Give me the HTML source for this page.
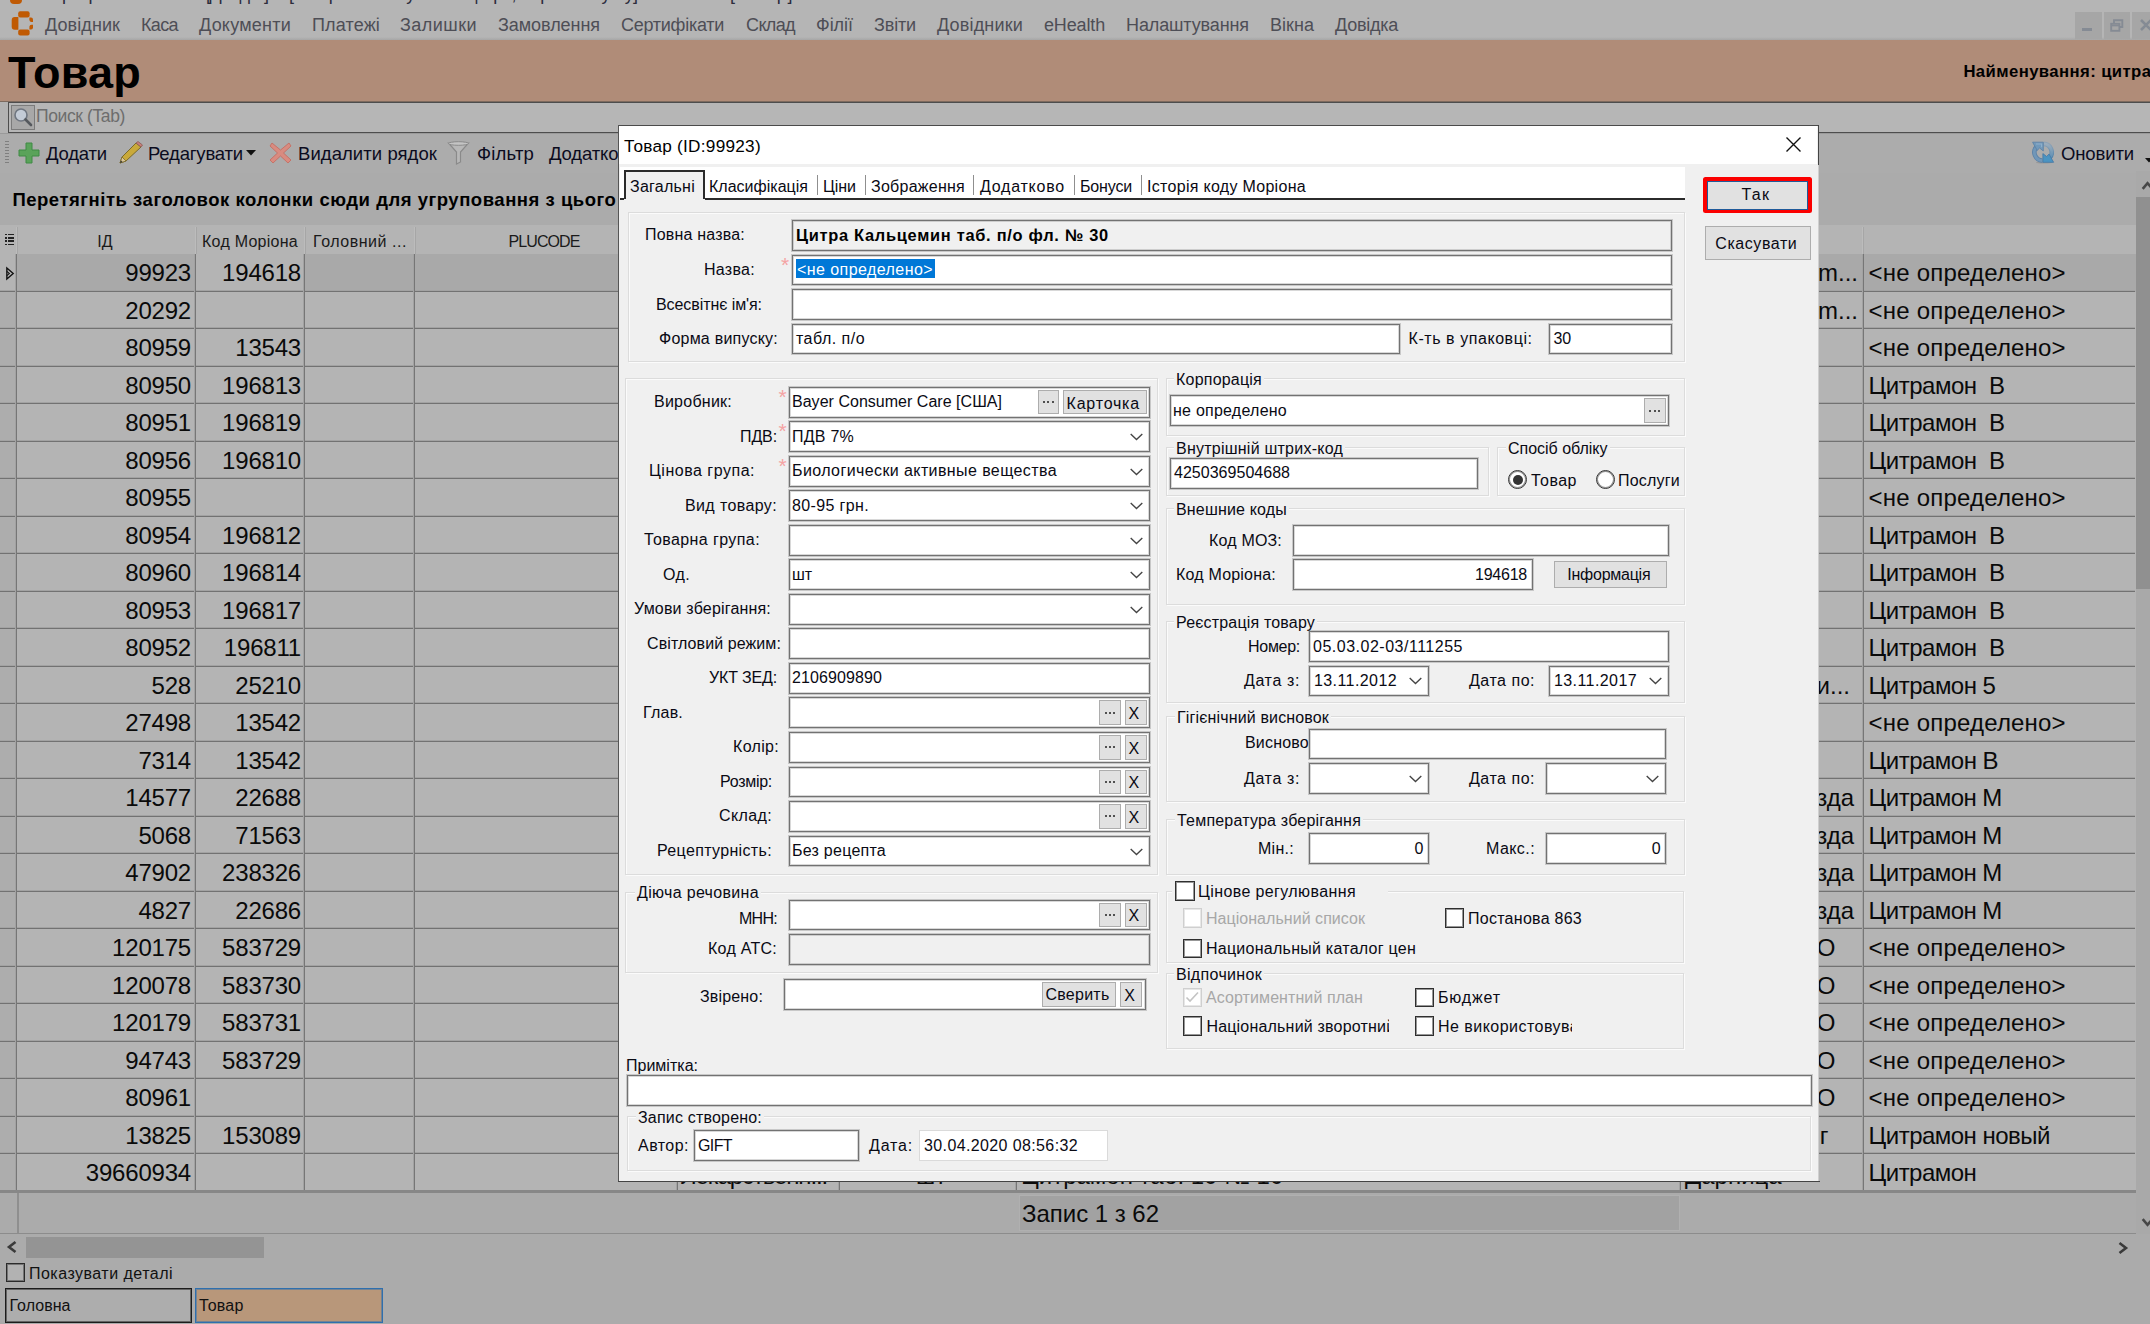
<!DOCTYPE html>
<html><head><meta charset="utf-8"><title>Товар</title><style>
html,body{margin:0;padding:0;}
body{width:2150px;height:1324px;overflow:hidden;position:relative;background:#ababab;font-family:"Liberation Sans",sans-serif;}
.t{position:absolute;white-space:pre;line-height:1;font-family:"Liberation Sans",sans-serif;}
.r{position:absolute;box-sizing:border-box;}
svg{position:absolute;overflow:visible;}
</style></head><body>
<div class="r" style="left:0.00px;top:0.00px;width:2150.00px;height:40.00px;background:#b5b5b5;"></div>
<div class="r" style="left:0.00px;top:36.50px;width:2150.00px;height:3.50px;background:linear-gradient(#b5b5b5,#a6a6a6);"></div>
<div class="r" style="left:0;top:0;width:2150px;height:5px;overflow:hidden;"><span class="t" style="left:49.00px;top:-15.00px;font-size:18px;color:#2c2c3c;">Програма</span><span class="t" style="left:206.00px;top:-15.00px;font-size:18px;color:#2c2c3c;letter-spacing:-1.500px;">[Довідник</span><span class="t" style="left:264.00px;top:-15.00px;font-size:18px;color:#2c2c3c;">]</span><span class="t" style="left:289.00px;top:-15.00px;font-size:18px;color:#2c2c3c;letter-spacing:-0.868px;">[Товар: Найменування: цитра, Виробник: усі у]</span><span class="t" style="left:730.00px;top:-15.00px;font-size:18px;color:#2c2c3c;letter-spacing:0.574px;">[Товар]</span></div>
<div class="r" style="left:9.50px;top:0.00px;width:12.00px;height:4.00px;background:#bf5a05;border-radius:0 0 4px 4px;"></div>
<svg style="left:11px;top:10px" width="24" height="27" viewBox="11 10 24 27">
<rect x="18.2" y="11.2" width="11.4" height="6.2" rx="2" fill="#c05a03"/>
<rect x="18.2" y="29.4" width="11.4" height="6.2" rx="2" fill="#c05a03"/>
<path d="M18.4 17 V29.8 H14.7 a3 3 0 0 1 -3 -3 V20 a3 3 0 0 1 3 -3 Z" fill="#c05a03"/>
<path d="M29.4 17.4 H31 a2 2 0 0 1 2 2 V22 H31.5 a2.2 2.2 0 0 1 -2.1 -2 Z" fill="#c05a03"/>
<path d="M29.4 29.4 H31 a2 2 0 0 0 2 -2 V24.8 H31.5 a2.2 2.2 0 0 0 -2.1 2 Z" fill="#c05a03"/>
</svg>
<span class="t" style="left:45.00px;top:16.00px;font-size:18px;color:#4e4e56;letter-spacing:0.082px;">Довідник</span>
<span class="t" style="left:141.00px;top:16.00px;font-size:18px;color:#4e4e56;letter-spacing:-0.627px;">Каса</span>
<span class="t" style="left:199.00px;top:16.00px;font-size:18px;color:#4e4e56;letter-spacing:0.233px;">Документи</span>
<span class="t" style="left:312.00px;top:16.00px;font-size:18px;color:#4e4e56;letter-spacing:0.150px;">Платежі</span>
<span class="t" style="left:400.00px;top:16.00px;font-size:18px;color:#4e4e56;letter-spacing:0.456px;">Залишки</span>
<span class="t" style="left:498.00px;top:16.00px;font-size:18px;color:#4e4e56;letter-spacing:-0.056px;">Замовлення</span>
<span class="t" style="left:621.00px;top:16.00px;font-size:18px;color:#4e4e56;letter-spacing:-0.265px;">Сертифікати</span>
<span class="t" style="left:746.00px;top:16.00px;font-size:18px;color:#4e4e56;letter-spacing:-0.619px;">Склад</span>
<span class="t" style="left:816.00px;top:16.00px;font-size:18px;color:#4e4e56;letter-spacing:-0.037px;">Філії</span>
<span class="t" style="left:874.00px;top:16.00px;font-size:18px;color:#4e4e56;letter-spacing:-0.147px;">Звіти</span>
<span class="t" style="left:937.00px;top:16.00px;font-size:18px;color:#4e4e56;letter-spacing:0.178px;">Довідники</span>
<span class="t" style="left:1044.00px;top:16.00px;font-size:18px;color:#4e4e56;letter-spacing:-0.149px;">eHealth</span>
<span class="t" style="left:1126.00px;top:16.00px;font-size:18px;color:#4e4e56;letter-spacing:-0.118px;">Налаштування</span>
<span class="t" style="left:1270.00px;top:16.00px;font-size:18px;color:#4e4e56;letter-spacing:0.033px;">Вікна</span>
<span class="t" style="left:1335.00px;top:16.00px;font-size:18px;color:#4e4e56;letter-spacing:-0.250px;">Довідка</span>
<div class="r" style="left:2075.00px;top:11.50px;width:26.50px;height:27.00px;background:#a6a6a6;"></div>
<div class="r" style="left:2103.50px;top:11.50px;width:26.50px;height:27.00px;background:#a6a6a6;"></div>
<div class="r" style="left:2132.00px;top:11.50px;width:26.50px;height:27.00px;background:#a6a6a6;"></div>
<div class="r" style="left:2082.00px;top:28.00px;width:9.50px;height:2.60px;background:#858b94;"></div>
<svg style="left:2109.5px;top:18.5px" width="14" height="13" viewBox="0 0 14 13" fill="none" stroke="#858b94" stroke-width="1.9"><path d="M4 4 V1.2 H12.3 V8 H9.5"/><rect x="1.2" y="4.8" width="8.2" height="7" /><path d="M1.2 6.6 H9.4" stroke-width="1.5"/></svg>
<svg style="left:2140px;top:19px" width="12" height="12" viewBox="0 0 12 12" fill="none" stroke="#858b94" stroke-width="2.6"><path d="M1 1 L11 11 M11 1 L1 11"/></svg>
<div class="r" style="left:0.00px;top:40.00px;width:2150.00px;height:61.50px;background:#b08c78;"></div>
<div class="r" style="left:0.00px;top:100.50px;width:2150.00px;height:1.50px;background:#7d6a5e;"></div>
<span class="t" style="left:8.00px;top:50.00px;font-size:45px;color:#000;font-weight:bold;letter-spacing:0.254px;">Товар</span>
<span class="t" style="left:1963.40px;top:64.00px;font-size:16.7px;color:#000;font-weight:bold;letter-spacing:0.414px;">Найменування: цитра</span>
<div class="r" style="left:0.00px;top:102.00px;width:2150.00px;height:31.00px;background:#b2b2b2;"></div>
<div class="r" style="left:8.00px;top:102.00px;width:2160.00px;height:30.50px;background:#b6b6b6;border:1.5px solid #4d4d4d;"></div>
<div class="r" style="left:11.00px;top:105.00px;width:23.50px;height:24.50px;background:#a8a8a8;border:1px solid #7b7b7b;"></div>
<svg style="left:13px;top:107px" width="20" height="20" viewBox="0 0 20 20">
<circle cx="8" cy="8" r="6" fill="#c3cbd6" stroke="#6f7680" stroke-width="1.6"/>
<path d="M12.5 12.5 L18 18" stroke="#55595e" stroke-width="2.6" stroke-linecap="round"/></svg>
<span class="t" style="left:36.00px;top:108.00px;font-size:17.5px;color:#6d6d6d;letter-spacing:-0.384px;">Поиск (Tab)</span>
<div class="r" style="left:0.00px;top:133.00px;width:2150.00px;height:40.00px;background:#acacac;"></div>
<div class="r" style="left:0.00px;top:132.50px;width:2150.00px;height:1.00px;background:#9a9a9a;"></div>
<div class="r" style="left:5.00px;top:141.00px;width:4.00px;height:1.20px;background:#7f7f7f;"></div>
<div class="r" style="left:5.00px;top:144.00px;width:4.00px;height:1.20px;background:#7f7f7f;"></div>
<div class="r" style="left:5.00px;top:147.00px;width:4.00px;height:1.20px;background:#7f7f7f;"></div>
<div class="r" style="left:5.00px;top:150.00px;width:4.00px;height:1.20px;background:#7f7f7f;"></div>
<div class="r" style="left:5.00px;top:153.00px;width:4.00px;height:1.20px;background:#7f7f7f;"></div>
<div class="r" style="left:5.00px;top:156.00px;width:4.00px;height:1.20px;background:#7f7f7f;"></div>
<div class="r" style="left:5.00px;top:159.00px;width:4.00px;height:1.20px;background:#7f7f7f;"></div>
<div class="r" style="left:5.00px;top:162.00px;width:4.00px;height:1.20px;background:#7f7f7f;"></div>
<svg style="left:18px;top:142px" width="22" height="22" viewBox="0 0 22 22"><path d="M8 1 h6 v7 h7 v6 h-7 v7 h-6 v-7 h-7 v-6 h7 z" fill="#5aa35a" stroke="#3f8a44" stroke-width="1"/></svg>
<span class="t" style="left:46.00px;top:145.00px;font-size:18.5px;color:#0b0b1e;letter-spacing:-0.184px;">Додати</span>
<svg style="left:117px;top:140px" width="28" height="26" viewBox="0 0 28 26">
<path d="M3 23 L5 17 L19 3 L24 7 L9 21 Z" fill="#c9a93a" stroke="#7a6a2c" stroke-width="1"/>
<path d="M19 3 L21 1.5 L25.5 5 L24 7 Z" fill="#c97f79" stroke="#8a5a55" stroke-width="0.8"/>
<path d="M3 23 L5 17 L9 21 Z" fill="#d9c59a" stroke="#7a6a2c" stroke-width="0.8"/>
<path d="M3 23 L4 20.5 L5.5 22 Z" fill="#333"/></svg>
<span class="t" style="left:148.00px;top:145.00px;font-size:18.5px;color:#0b0b1e;letter-spacing:-0.180px;">Редагувати</span>
<svg style="left:246px;top:150px" width="10" height="6" viewBox="0 0 10 6"><path d="M0 0 H10 L5 5.5 Z" fill="#111"/></svg>
<svg style="left:269px;top:142px" width="23" height="22" viewBox="0 0 23 22"><path d="M3 1 L11.5 8 L20 1 L22 4 L14.5 11 L22 18 L19 21 L11.5 14 L4 21 L1 18 L8.5 11 L1 4 Z" fill="#d98b80" stroke="#c46e63" stroke-width="0.9"/></svg>
<span class="t" style="left:298.00px;top:145.00px;font-size:18.5px;color:#0b0b1e;letter-spacing:0.063px;">Видалити рядок</span>
<svg style="left:447px;top:141px" width="23" height="24" viewBox="0 0 23 24"><path d="M1.5 2 H21.5 L13.5 11 V21 L9.5 23 V11 Z" fill="#b8b8b8" stroke="#8a8a8a" stroke-width="1.2"/><ellipse cx="11.5" cy="2.5" rx="10" ry="1.8" fill="#c4c4c4" stroke="#8a8a8a" stroke-width="1"/></svg>
<span class="t" style="left:477.00px;top:145.00px;font-size:18.5px;color:#0b0b1e;letter-spacing:0.179px;">Фільтр</span>
<span class="t" style="left:549.00px;top:145.00px;font-size:18.5px;color:#0b0b1e;letter-spacing:-0.141px;">Додатково</span>
<svg style="left:2031px;top:141px" width="24" height="23" viewBox="0 0 24 23">
<defs><linearGradient id="rg" x1="0" y1="0" x2="0" y2="1"><stop offset="0" stop-color="#9cadbc"/><stop offset="1" stop-color="#5f90b5"/></linearGradient>
<linearGradient id="rg2" x1="0" y1="0" x2="0" y2="1"><stop offset="0" stop-color="#8ea2b5"/><stop offset="1" stop-color="#4f81aa"/></linearGradient></defs>
<ellipse cx="13" cy="21.4" rx="8" ry="1.2" fill="#989898"/>
<path d="M11.4 19.6 A8.35 8.35 0 0 1 5.6 5.6" fill="none" stroke="#5d83a8" stroke-width="4.6"/>
<path d="M11.4 19.6 A8.35 8.35 0 0 1 5.6 5.6" fill="none" stroke="#7197b8" stroke-width="2.8"/>
<path d="M12.8 2.9 A8.35 8.35 0 0 1 18.6 16.8" fill="none" stroke="url(#rg2)" stroke-width="4.6"/>
<path d="M12.8 2.9 A8.35 8.35 0 0 1 18.6 16.8" fill="none" stroke="url(#rg)" stroke-width="2.8"/>
<path d="M1.6 1.2 H12.3 V10 L8.6 7 L6.2 9.4 Z" fill="#7299ba" stroke="#5d83a8" stroke-width="0.9"/>
<path d="M22.6 21.3 H11.9 V12.6 L15.6 15.5 L18 13.1 Z" fill="#4a94c2" stroke="#4a7aa6" stroke-width="0.9"/>
<path d="M5 3 L10.6 3 L10.6 6.3" fill="none" stroke="#8fb0cb" stroke-width="1.1"/>
</svg>
<span class="t" style="left:2061.00px;top:145.00px;font-size:18.5px;color:#0b0b1e;letter-spacing:-0.124px;">Оновити</span>
<svg style="left:2144.5px;top:158px" width="8" height="5" viewBox="0 0 8 5"><path d="M0 0 H8 L4 4.5 Z" fill="#111"/></svg>
<div class="r" style="left:0.00px;top:173.00px;width:2150.00px;height:52.00px;background:#ababab;"></div>
<span class="t" style="left:12.40px;top:191.00px;font-size:18.5px;color:#000;font-weight:bold;letter-spacing:0.528px;">Перетягніть заголовок колонки сюди для угруповання з цього</span>
<div class="r" style="left:0.00px;top:225.00px;width:2136.00px;height:30.00px;background:#b4b4b4;"></div>
<span class="t" style="left:97.36px;top:234.00px;font-size:16px;color:#1a1a1a;">ІД</span>
<span class="t" style="left:202.00px;top:234.00px;font-size:16px;color:#1a1a1a;letter-spacing:0.260px;">Код Моріона</span>
<span class="t" style="left:313.00px;top:234.00px;font-size:16px;color:#1a1a1a;letter-spacing:0.538px;">Головний ...</span>
<span class="t" style="left:508.50px;top:234.00px;font-size:16px;color:#1a1a1a;letter-spacing:-0.908px;">PLUCODE</span>
<div class="r" style="left:16.00px;top:227.00px;width:1.00px;height:27.00px;background:#bcbcbc;"></div>
<div class="r" style="left:17.00px;top:227.00px;width:1.00px;height:27.00px;background:#a6a6a6;"></div>
<div class="r" style="left:195.00px;top:227.00px;width:1.00px;height:27.00px;background:#bcbcbc;"></div>
<div class="r" style="left:196.00px;top:227.00px;width:1.00px;height:27.00px;background:#a6a6a6;"></div>
<div class="r" style="left:304.00px;top:227.00px;width:1.00px;height:27.00px;background:#bcbcbc;"></div>
<div class="r" style="left:305.00px;top:227.00px;width:1.00px;height:27.00px;background:#a6a6a6;"></div>
<div class="r" style="left:414.00px;top:227.00px;width:1.00px;height:27.00px;background:#bcbcbc;"></div>
<div class="r" style="left:415.00px;top:227.00px;width:1.00px;height:27.00px;background:#a6a6a6;"></div>
<div class="r" style="left:676.00px;top:227.00px;width:1.00px;height:27.00px;background:#bcbcbc;"></div>
<div class="r" style="left:677.00px;top:227.00px;width:1.00px;height:27.00px;background:#a6a6a6;"></div>
<div class="r" style="left:838.00px;top:227.00px;width:1.00px;height:27.00px;background:#bcbcbc;"></div>
<div class="r" style="left:839.00px;top:227.00px;width:1.00px;height:27.00px;background:#a6a6a6;"></div>
<div class="r" style="left:1015.00px;top:227.00px;width:1.00px;height:27.00px;background:#bcbcbc;"></div>
<div class="r" style="left:1016.00px;top:227.00px;width:1.00px;height:27.00px;background:#a6a6a6;"></div>
<div class="r" style="left:1679.00px;top:227.00px;width:1.00px;height:27.00px;background:#bcbcbc;"></div>
<div class="r" style="left:1680.00px;top:227.00px;width:1.00px;height:27.00px;background:#a6a6a6;"></div>
<div class="r" style="left:1862.00px;top:227.00px;width:1.00px;height:27.00px;background:#bcbcbc;"></div>
<div class="r" style="left:1863.00px;top:227.00px;width:1.00px;height:27.00px;background:#a6a6a6;"></div>
<div class="r" style="left:5.00px;top:234.00px;width:2.00px;height:1.40px;background:#222;"></div>
<div class="r" style="left:8.00px;top:234.00px;width:6.00px;height:1.40px;background:#222;"></div>
<div class="r" style="left:5.00px;top:237.20px;width:2.00px;height:1.40px;background:#222;"></div>
<div class="r" style="left:8.00px;top:237.20px;width:6.00px;height:1.40px;background:#222;"></div>
<div class="r" style="left:5.00px;top:240.40px;width:2.00px;height:1.40px;background:#222;"></div>
<div class="r" style="left:8.00px;top:240.40px;width:6.00px;height:1.40px;background:#222;"></div>
<div class="r" style="left:5.00px;top:243.60px;width:2.00px;height:1.40px;background:#222;"></div>
<div class="r" style="left:8.00px;top:243.60px;width:6.00px;height:1.40px;background:#222;"></div>
<div class="r" style="left:0.00px;top:254.00px;width:2136.00px;height:937.50px;background:#b4b4b4;"></div>
<div class="r" style="left:17.00px;top:254.00px;width:2119.00px;height:37.50px;background:#a9a9a9;"></div>
<div class="r" style="left:196.00px;top:254.00px;width:109.00px;height:37.50px;background:#b4b4b4;"></div>
<div class="r" style="left:0.00px;top:254.00px;width:17.00px;height:978.50px;background:#adadad;"></div>
<div class="r" style="left:0.00px;top:254.00px;width:17.00px;height:37.50px;background:#b4b4b4;"></div>
<span class="t" style="left:125.26px;top:261.00px;font-size:24px;color:#0a0a0a;letter-spacing:-0.200px;">99923</span>
<span class="t" style="left:222.11px;top:261.00px;font-size:24px;color:#0a0a0a;letter-spacing:-0.200px;">194618</span>
<span class="t" style="left:1818.00px;top:261.00px;font-size:24px;color:#0a0a0a;">m...</span>
<span class="t" style="left:1868.60px;top:261.00px;font-size:24px;color:#0a0a0a;letter-spacing:0.194px;">&lt;не определено&gt;</span>
<div class="r" style="left:0.00px;top:290.00px;width:2134.50px;height:1.00px;background:#a2a2a2;"></div>
<div class="r" style="left:0.00px;top:291.00px;width:2134.50px;height:1.00px;background:#727272;"></div>
<span class="t" style="left:125.26px;top:299.00px;font-size:24px;color:#0a0a0a;letter-spacing:-0.200px;">20292</span>
<span class="t" style="left:1818.00px;top:299.00px;font-size:24px;color:#0a0a0a;">m...</span>
<span class="t" style="left:1868.60px;top:299.00px;font-size:24px;color:#0a0a0a;letter-spacing:0.194px;">&lt;не определено&gt;</span>
<div class="r" style="left:0.00px;top:327.00px;width:2134.50px;height:1.00px;background:#a2a2a2;"></div>
<div class="r" style="left:0.00px;top:328.00px;width:2134.50px;height:1.00px;background:#727272;"></div>
<span class="t" style="left:125.26px;top:336.00px;font-size:24px;color:#0a0a0a;letter-spacing:-0.200px;">80959</span>
<span class="t" style="left:235.26px;top:336.00px;font-size:24px;color:#0a0a0a;letter-spacing:-0.200px;">13543</span>
<span class="t" style="left:1868.60px;top:336.00px;font-size:24px;color:#0a0a0a;letter-spacing:0.194px;">&lt;не определено&gt;</span>
<div class="r" style="left:0.00px;top:365.00px;width:2134.50px;height:1.00px;background:#a2a2a2;"></div>
<div class="r" style="left:0.00px;top:366.00px;width:2134.50px;height:1.00px;background:#727272;"></div>
<span class="t" style="left:125.26px;top:374.00px;font-size:24px;color:#0a0a0a;letter-spacing:-0.200px;">80950</span>
<span class="t" style="left:222.11px;top:374.00px;font-size:24px;color:#0a0a0a;letter-spacing:-0.200px;">196813</span>
<span class="t" style="left:1868.60px;top:374.00px;font-size:24px;color:#0a0a0a;letter-spacing:-0.499px;">Цитрамон  В</span>
<div class="r" style="left:0.00px;top:402.00px;width:2134.50px;height:1.00px;background:#a2a2a2;"></div>
<div class="r" style="left:0.00px;top:403.00px;width:2134.50px;height:1.00px;background:#727272;"></div>
<span class="t" style="left:125.26px;top:411.00px;font-size:24px;color:#0a0a0a;letter-spacing:-0.200px;">80951</span>
<span class="t" style="left:222.11px;top:411.00px;font-size:24px;color:#0a0a0a;letter-spacing:-0.200px;">196819</span>
<span class="t" style="left:1868.60px;top:411.00px;font-size:24px;color:#0a0a0a;letter-spacing:-0.499px;">Цитрамон  В</span>
<div class="r" style="left:0.00px;top:440.00px;width:2134.50px;height:1.00px;background:#a2a2a2;"></div>
<div class="r" style="left:0.00px;top:441.00px;width:2134.50px;height:1.00px;background:#727272;"></div>
<span class="t" style="left:125.26px;top:449.00px;font-size:24px;color:#0a0a0a;letter-spacing:-0.200px;">80956</span>
<span class="t" style="left:222.11px;top:449.00px;font-size:24px;color:#0a0a0a;letter-spacing:-0.200px;">196810</span>
<span class="t" style="left:1868.60px;top:449.00px;font-size:24px;color:#0a0a0a;letter-spacing:-0.499px;">Цитрамон  В</span>
<div class="r" style="left:0.00px;top:477.00px;width:2134.50px;height:1.00px;background:#a2a2a2;"></div>
<div class="r" style="left:0.00px;top:478.00px;width:2134.50px;height:1.00px;background:#727272;"></div>
<span class="t" style="left:125.26px;top:486.00px;font-size:24px;color:#0a0a0a;letter-spacing:-0.200px;">80955</span>
<span class="t" style="left:1868.60px;top:486.00px;font-size:24px;color:#0a0a0a;letter-spacing:0.194px;">&lt;не определено&gt;</span>
<div class="r" style="left:0.00px;top:515.00px;width:2134.50px;height:1.00px;background:#a2a2a2;"></div>
<div class="r" style="left:0.00px;top:516.00px;width:2134.50px;height:1.00px;background:#727272;"></div>
<span class="t" style="left:125.26px;top:524.00px;font-size:24px;color:#0a0a0a;letter-spacing:-0.200px;">80954</span>
<span class="t" style="left:222.11px;top:524.00px;font-size:24px;color:#0a0a0a;letter-spacing:-0.200px;">196812</span>
<span class="t" style="left:1868.60px;top:524.00px;font-size:24px;color:#0a0a0a;letter-spacing:-0.499px;">Цитрамон  В</span>
<div class="r" style="left:0.00px;top:552.00px;width:2134.50px;height:1.00px;background:#a2a2a2;"></div>
<div class="r" style="left:0.00px;top:553.00px;width:2134.50px;height:1.00px;background:#727272;"></div>
<span class="t" style="left:125.26px;top:561.00px;font-size:24px;color:#0a0a0a;letter-spacing:-0.200px;">80960</span>
<span class="t" style="left:222.11px;top:561.00px;font-size:24px;color:#0a0a0a;letter-spacing:-0.200px;">196814</span>
<span class="t" style="left:1868.60px;top:561.00px;font-size:24px;color:#0a0a0a;letter-spacing:-0.499px;">Цитрамон  В</span>
<div class="r" style="left:0.00px;top:590.00px;width:2134.50px;height:1.00px;background:#a2a2a2;"></div>
<div class="r" style="left:0.00px;top:591.00px;width:2134.50px;height:1.00px;background:#727272;"></div>
<span class="t" style="left:125.26px;top:599.00px;font-size:24px;color:#0a0a0a;letter-spacing:-0.200px;">80953</span>
<span class="t" style="left:222.11px;top:599.00px;font-size:24px;color:#0a0a0a;letter-spacing:-0.200px;">196817</span>
<span class="t" style="left:1868.60px;top:599.00px;font-size:24px;color:#0a0a0a;letter-spacing:-0.499px;">Цитрамон  В</span>
<div class="r" style="left:0.00px;top:627.00px;width:2134.50px;height:1.00px;background:#a2a2a2;"></div>
<div class="r" style="left:0.00px;top:628.00px;width:2134.50px;height:1.00px;background:#727272;"></div>
<span class="t" style="left:125.26px;top:636.00px;font-size:24px;color:#0a0a0a;letter-spacing:-0.200px;">80952</span>
<span class="t" style="left:223.87px;top:636.00px;font-size:24px;color:#0a0a0a;letter-spacing:-0.196px;">196811</span>
<span class="t" style="left:1868.60px;top:636.00px;font-size:24px;color:#0a0a0a;letter-spacing:-0.499px;">Цитрамон  В</span>
<div class="r" style="left:0.00px;top:665.00px;width:2134.50px;height:1.00px;background:#a2a2a2;"></div>
<div class="r" style="left:0.00px;top:666.00px;width:2134.50px;height:1.00px;background:#727272;"></div>
<span class="t" style="left:151.56px;top:674.00px;font-size:24px;color:#0a0a0a;letter-spacing:-0.200px;">528</span>
<span class="t" style="left:235.26px;top:674.00px;font-size:24px;color:#0a0a0a;letter-spacing:-0.200px;">25210</span>
<span class="t" style="left:1816.59px;top:674.00px;font-size:24px;color:#0a0a0a;">и...</span>
<span class="t" style="left:1868.60px;top:674.00px;font-size:24px;color:#0a0a0a;letter-spacing:-0.513px;">Цитрамон 5</span>
<div class="r" style="left:0.00px;top:702.00px;width:2134.50px;height:1.00px;background:#a2a2a2;"></div>
<div class="r" style="left:0.00px;top:703.00px;width:2134.50px;height:1.00px;background:#727272;"></div>
<span class="t" style="left:125.26px;top:711.00px;font-size:24px;color:#0a0a0a;letter-spacing:-0.200px;">27498</span>
<span class="t" style="left:235.26px;top:711.00px;font-size:24px;color:#0a0a0a;letter-spacing:-0.200px;">13542</span>
<span class="t" style="left:1868.60px;top:711.00px;font-size:24px;color:#0a0a0a;letter-spacing:0.194px;">&lt;не определено&gt;</span>
<div class="r" style="left:0.00px;top:740.00px;width:2134.50px;height:1.00px;background:#a2a2a2;"></div>
<div class="r" style="left:0.00px;top:741.00px;width:2134.50px;height:1.00px;background:#727272;"></div>
<span class="t" style="left:138.41px;top:749.00px;font-size:24px;color:#0a0a0a;letter-spacing:-0.200px;">7314</span>
<span class="t" style="left:235.26px;top:749.00px;font-size:24px;color:#0a0a0a;letter-spacing:-0.200px;">13542</span>
<span class="t" style="left:1868.60px;top:749.00px;font-size:24px;color:#0a0a0a;letter-spacing:-0.523px;">Цитрамон В</span>
<div class="r" style="left:0.00px;top:777.00px;width:2134.50px;height:1.00px;background:#a2a2a2;"></div>
<div class="r" style="left:0.00px;top:778.00px;width:2134.50px;height:1.00px;background:#727272;"></div>
<span class="t" style="left:125.26px;top:786.00px;font-size:24px;color:#0a0a0a;letter-spacing:-0.200px;">14577</span>
<span class="t" style="left:235.26px;top:786.00px;font-size:24px;color:#0a0a0a;letter-spacing:-0.200px;">22688</span>
<span class="t" style="left:1816.17px;top:786.00px;font-size:24px;color:#0a0a0a;">зда</span>
<span class="t" style="left:1868.60px;top:786.00px;font-size:24px;color:#0a0a0a;letter-spacing:-0.539px;">Цитрамон М</span>
<div class="r" style="left:0.00px;top:815.00px;width:2134.50px;height:1.00px;background:#a2a2a2;"></div>
<div class="r" style="left:0.00px;top:816.00px;width:2134.50px;height:1.00px;background:#727272;"></div>
<span class="t" style="left:138.41px;top:824.00px;font-size:24px;color:#0a0a0a;letter-spacing:-0.200px;">5068</span>
<span class="t" style="left:235.26px;top:824.00px;font-size:24px;color:#0a0a0a;letter-spacing:-0.200px;">71563</span>
<span class="t" style="left:1816.17px;top:824.00px;font-size:24px;color:#0a0a0a;">зда</span>
<span class="t" style="left:1868.60px;top:824.00px;font-size:24px;color:#0a0a0a;letter-spacing:-0.539px;">Цитрамон М</span>
<div class="r" style="left:0.00px;top:852.00px;width:2134.50px;height:1.00px;background:#a2a2a2;"></div>
<div class="r" style="left:0.00px;top:853.00px;width:2134.50px;height:1.00px;background:#727272;"></div>
<span class="t" style="left:125.26px;top:861.00px;font-size:24px;color:#0a0a0a;letter-spacing:-0.200px;">47902</span>
<span class="t" style="left:222.11px;top:861.00px;font-size:24px;color:#0a0a0a;letter-spacing:-0.200px;">238326</span>
<span class="t" style="left:1816.17px;top:861.00px;font-size:24px;color:#0a0a0a;">зда</span>
<span class="t" style="left:1868.60px;top:861.00px;font-size:24px;color:#0a0a0a;letter-spacing:-0.539px;">Цитрамон М</span>
<div class="r" style="left:0.00px;top:890.00px;width:2134.50px;height:1.00px;background:#a2a2a2;"></div>
<div class="r" style="left:0.00px;top:891.00px;width:2134.50px;height:1.00px;background:#727272;"></div>
<span class="t" style="left:138.41px;top:899.00px;font-size:24px;color:#0a0a0a;letter-spacing:-0.200px;">4827</span>
<span class="t" style="left:235.26px;top:899.00px;font-size:24px;color:#0a0a0a;letter-spacing:-0.200px;">22686</span>
<span class="t" style="left:1816.17px;top:899.00px;font-size:24px;color:#0a0a0a;">зда</span>
<span class="t" style="left:1868.60px;top:899.00px;font-size:24px;color:#0a0a0a;letter-spacing:-0.539px;">Цитрамон М</span>
<div class="r" style="left:0.00px;top:927.00px;width:2134.50px;height:1.00px;background:#a2a2a2;"></div>
<div class="r" style="left:0.00px;top:928.00px;width:2134.50px;height:1.00px;background:#727272;"></div>
<span class="t" style="left:112.11px;top:936.00px;font-size:24px;color:#0a0a0a;letter-spacing:-0.200px;">120175</span>
<span class="t" style="left:222.11px;top:936.00px;font-size:24px;color:#0a0a0a;letter-spacing:-0.200px;">583729</span>
<span class="t" style="left:1816.83px;top:936.00px;font-size:24px;color:#0a0a0a;">О</span>
<span class="t" style="left:1868.60px;top:936.00px;font-size:24px;color:#0a0a0a;letter-spacing:0.194px;">&lt;не определено&gt;</span>
<div class="r" style="left:0.00px;top:965.00px;width:2134.50px;height:1.00px;background:#a2a2a2;"></div>
<div class="r" style="left:0.00px;top:966.00px;width:2134.50px;height:1.00px;background:#727272;"></div>
<span class="t" style="left:112.11px;top:974.00px;font-size:24px;color:#0a0a0a;letter-spacing:-0.200px;">120078</span>
<span class="t" style="left:222.11px;top:974.00px;font-size:24px;color:#0a0a0a;letter-spacing:-0.200px;">583730</span>
<span class="t" style="left:1816.83px;top:974.00px;font-size:24px;color:#0a0a0a;">О</span>
<span class="t" style="left:1868.60px;top:974.00px;font-size:24px;color:#0a0a0a;letter-spacing:0.194px;">&lt;не определено&gt;</span>
<div class="r" style="left:0.00px;top:1002.00px;width:2134.50px;height:1.00px;background:#a2a2a2;"></div>
<div class="r" style="left:0.00px;top:1003.00px;width:2134.50px;height:1.00px;background:#727272;"></div>
<span class="t" style="left:112.11px;top:1011.00px;font-size:24px;color:#0a0a0a;letter-spacing:-0.200px;">120179</span>
<span class="t" style="left:222.11px;top:1011.00px;font-size:24px;color:#0a0a0a;letter-spacing:-0.200px;">583731</span>
<span class="t" style="left:1816.83px;top:1011.00px;font-size:24px;color:#0a0a0a;">О</span>
<span class="t" style="left:1868.60px;top:1011.00px;font-size:24px;color:#0a0a0a;letter-spacing:0.194px;">&lt;не определено&gt;</span>
<div class="r" style="left:0.00px;top:1040.00px;width:2134.50px;height:1.00px;background:#a2a2a2;"></div>
<div class="r" style="left:0.00px;top:1041.00px;width:2134.50px;height:1.00px;background:#727272;"></div>
<span class="t" style="left:125.26px;top:1049.00px;font-size:24px;color:#0a0a0a;letter-spacing:-0.200px;">94743</span>
<span class="t" style="left:222.11px;top:1049.00px;font-size:24px;color:#0a0a0a;letter-spacing:-0.200px;">583729</span>
<span class="t" style="left:1816.83px;top:1049.00px;font-size:24px;color:#0a0a0a;">О</span>
<span class="t" style="left:1868.60px;top:1049.00px;font-size:24px;color:#0a0a0a;letter-spacing:0.194px;">&lt;не определено&gt;</span>
<div class="r" style="left:0.00px;top:1077.00px;width:2134.50px;height:1.00px;background:#a2a2a2;"></div>
<div class="r" style="left:0.00px;top:1078.00px;width:2134.50px;height:1.00px;background:#727272;"></div>
<span class="t" style="left:125.26px;top:1086.00px;font-size:24px;color:#0a0a0a;letter-spacing:-0.200px;">80961</span>
<span class="t" style="left:1816.83px;top:1086.00px;font-size:24px;color:#0a0a0a;">О</span>
<span class="t" style="left:1868.60px;top:1086.00px;font-size:24px;color:#0a0a0a;letter-spacing:0.194px;">&lt;не определено&gt;</span>
<div class="r" style="left:0.00px;top:1115.00px;width:2134.50px;height:1.00px;background:#a2a2a2;"></div>
<div class="r" style="left:0.00px;top:1116.00px;width:2134.50px;height:1.00px;background:#727272;"></div>
<span class="t" style="left:125.26px;top:1124.00px;font-size:24px;color:#0a0a0a;letter-spacing:-0.200px;">13825</span>
<span class="t" style="left:222.11px;top:1124.00px;font-size:24px;color:#0a0a0a;letter-spacing:-0.200px;">153089</span>
<span class="t" style="left:1819.75px;top:1124.00px;font-size:24px;color:#0a0a0a;">г</span>
<span class="t" style="left:1868.60px;top:1124.00px;font-size:24px;color:#0a0a0a;letter-spacing:-0.524px;">Цитрамон новый</span>
<div class="r" style="left:0.00px;top:1152.00px;width:2134.50px;height:1.00px;background:#a2a2a2;"></div>
<div class="r" style="left:0.00px;top:1153.00px;width:2134.50px;height:1.00px;background:#727272;"></div>
<span class="t" style="left:85.82px;top:1161.00px;font-size:24px;color:#0a0a0a;letter-spacing:-0.200px;">39660934</span>
<span class="t" style="left:1868.60px;top:1161.00px;font-size:24px;color:#0a0a0a;letter-spacing:-0.544px;">Цитрамон</span>
<div class="r" style="left:0.00px;top:1190.00px;width:2134.50px;height:1.00px;background:#a2a2a2;"></div>
<div class="r" style="left:0.00px;top:1191.00px;width:2134.50px;height:1.00px;background:#727272;"></div>
<div class="r" style="left:15.00px;top:254.00px;width:1.00px;height:937.50px;background:#a2a2a2;"></div>
<div class="r" style="left:16.00px;top:254.00px;width:1.00px;height:937.50px;background:#767676;"></div>
<div class="r" style="left:194.00px;top:254.00px;width:1.00px;height:937.50px;background:#a2a2a2;"></div>
<div class="r" style="left:195.00px;top:254.00px;width:1.00px;height:937.50px;background:#767676;"></div>
<div class="r" style="left:303.00px;top:254.00px;width:1.00px;height:937.50px;background:#a2a2a2;"></div>
<div class="r" style="left:304.00px;top:254.00px;width:1.00px;height:937.50px;background:#767676;"></div>
<div class="r" style="left:413.00px;top:254.00px;width:1.00px;height:937.50px;background:#a2a2a2;"></div>
<div class="r" style="left:414.00px;top:254.00px;width:1.00px;height:937.50px;background:#767676;"></div>
<div class="r" style="left:676.00px;top:254.00px;width:1.00px;height:937.50px;background:#a2a2a2;"></div>
<div class="r" style="left:677.00px;top:254.00px;width:1.00px;height:937.50px;background:#767676;"></div>
<div class="r" style="left:838.00px;top:254.00px;width:1.00px;height:937.50px;background:#a2a2a2;"></div>
<div class="r" style="left:839.00px;top:254.00px;width:1.00px;height:937.50px;background:#767676;"></div>
<div class="r" style="left:1015.00px;top:254.00px;width:1.00px;height:937.50px;background:#a2a2a2;"></div>
<div class="r" style="left:1016.00px;top:254.00px;width:1.00px;height:937.50px;background:#767676;"></div>
<div class="r" style="left:1679.00px;top:254.00px;width:1.00px;height:937.50px;background:#a2a2a2;"></div>
<div class="r" style="left:1680.00px;top:254.00px;width:1.00px;height:937.50px;background:#767676;"></div>
<div class="r" style="left:1862.00px;top:254.00px;width:1.00px;height:937.50px;background:#a2a2a2;"></div>
<div class="r" style="left:1863.00px;top:254.00px;width:1.00px;height:937.50px;background:#767676;"></div>
<span class="t" style="left:681.00px;top:1164.00px;font-size:24px;color:#0a0a0a;letter-spacing:-1.154px;">Лекарственн...</span>
<span class="t" style="left:916.00px;top:1164.00px;font-size:24px;color:#0a0a0a;">шт</span>
<span class="t" style="left:1021.00px;top:1164.00px;font-size:24px;color:#0a0a0a;">Цитрамон таб. 10 № 10</span>
<span class="t" style="left:1685.00px;top:1164.00px;font-size:24px;color:#0a0a0a;">Дарница</span>
<svg style="left:5.5px;top:267px" width="8.5" height="13" viewBox="0 0 10 15"><path d="M1 1 L8.5 7.5 L1 14 Z" fill="none" stroke="#111" stroke-width="1.6"/><path d="M1 5 L4 7.5 L1 10" fill="none" stroke="#111" stroke-width="1.2"/></svg>
<div class="r" style="left:0.00px;top:1189.50px;width:2136.00px;height:3.00px;background:#878787;"></div>
<div class="r" style="left:0.00px;top:1193.00px;width:2136.00px;height:40.00px;background:#ababab;"></div>
<div class="r" style="left:17.00px;top:1193.00px;width:1.50px;height:40.00px;background:#8f8f8f;"></div>
<div class="r" style="left:1018.50px;top:1194.50px;width:661.50px;height:36.50px;background:#a2a2a2;border:1px solid #b0b0b0;"></div>
<span class="t" style="left:1022.00px;top:1202.00px;font-size:24px;color:#0a0a0a;letter-spacing:-0.025px;">Запис 1 з 62</span>
<div class="r" style="left:0.00px;top:1232.50px;width:2150.00px;height:1.50px;background:#8c8c8c;"></div>
<div class="r" style="left:2135.80px;top:171.00px;width:14.20px;height:1063.00px;background:#a9a9a9;"></div>
<div class="r" style="left:2136.00px;top:197.00px;width:14.00px;height:392.00px;background:#909090;"></div>
<svg style="left:2141.5px;top:181px" width="11" height="9" viewBox="0 0 11 9"><path d="M0.7 7.8 L5.5 2.2 L10.3 7.8" fill="none" stroke="#474747" stroke-width="2.6"/></svg>
<svg style="left:2141.5px;top:1218px" width="11" height="9" viewBox="0 0 11 9"><path d="M0.7 1.2 L5.5 6.8 L10.3 1.2" fill="none" stroke="#474747" stroke-width="2.6"/></svg>
<div class="r" style="left:0.00px;top:1234.00px;width:2150.00px;height:26.00px;background:#ababab;"></div>
<div class="r" style="left:26.00px;top:1236.50px;width:238.00px;height:21.50px;background:#949494;"></div>
<svg style="left:7px;top:1241px" width="10" height="12" viewBox="0 0 10 12"><path d="M8.5 1 L2 6 L8.5 11" fill="none" stroke="#3a3a3a" stroke-width="2.6"/></svg>
<svg style="left:2118px;top:1241.5px" width="10" height="12" viewBox="0 0 10 12"><path d="M1.5 1 L8 6 L1.5 11" fill="none" stroke="#3a3a3a" stroke-width="2.6"/></svg>
<div class="r" style="left:6.00px;top:1263.00px;width:19.00px;height:19.00px;background:#b2b2b2;border:1px solid #2b2b2b;box-shadow:inset 0 0 0 1px rgba(43,43,43,.45);"></div>
<span class="t" style="left:29.00px;top:1266.00px;font-size:16px;color:#111;letter-spacing:0.480px;">Показувати деталі</span>
<div class="r" style="left:5.00px;top:1288.00px;width:187.00px;height:35.00px;background:#adadad;border:1px solid #1c1c1c;box-shadow:inset 0 0 0 1px rgba(28,28,28,.5);"></div>
<span class="t" style="left:9.50px;top:1298.00px;font-size:16px;color:#111;letter-spacing:0.030px;">Головна</span>
<div class="r" style="left:195.00px;top:1288.00px;width:187.50px;height:35.00px;background:#b8977a;border:1px solid #2e6fae;box-shadow:inset 0 0 0 1px rgba(46,111,174,.5);"></div>
<span class="t" style="left:199.00px;top:1298.00px;font-size:16px;color:#111;letter-spacing:0.192px;">Товар</span>
<div class="r" style="left:618.00px;top:125.00px;width:1200.50px;height:1056.00px;background:#f0f0f0;"></div>
<div class="r" style="left:618.00px;top:125.00px;width:1201.00px;height:1.00px;background:#4a4a4a;"></div>
<div class="r" style="left:618.00px;top:125.00px;width:1.00px;height:1056.00px;background:#555;"></div>
<div class="r" style="left:618.00px;top:1180.50px;width:1201.50px;height:1.20px;background:#444;"></div>
<div class="r" style="left:1818.00px;top:125.00px;width:1.00px;height:40.00px;background:#444;"></div>
<div class="r" style="left:1817.50px;top:165.00px;width:1.50px;height:1016.00px;background:#cfcfcf;"></div>
<div class="r" style="left:619.00px;top:126.00px;width:1198.00px;height:38.00px;background:#ffffff;"></div>
<span class="t" style="left:624.00px;top:138.00px;font-size:17.2px;color:#000;letter-spacing:0.259px;">Товар (ID:99923)</span>
<svg style="left:1785.5px;top:136.6px" width="15" height="15" viewBox="0 0 15 15"><path d="M0.5 0.5 L14.5 14.5 M14.5 0.5 L0.5 14.5" stroke="#111" stroke-width="1.4" fill="none"/></svg>
<div class="r" style="left:620.00px;top:167.00px;width:1065.00px;height:32.00px;background:#ffffff;"></div>
<div class="r" style="left:620.00px;top:198.00px;width:1065.00px;height:2.00px;background:#2b2b2b;"></div>
<div class="r" style="left:624.00px;top:169.80px;width:80.50px;height:30.70px;background:#f0f0f0;"></div>
<div class="r" style="left:624.00px;top:169.80px;width:80.50px;height:2.00px;background:#2b2b2b;"></div>
<div class="r" style="left:624.00px;top:169.80px;width:2.00px;height:29.70px;background:#2b2b2b;"></div>
<div class="r" style="left:702.50px;top:169.80px;width:2.00px;height:29.70px;background:#2b2b2b;"></div>
<span class="t" style="left:630.00px;top:179.00px;font-size:16px;color:#0a0a14;letter-spacing:0.249px;">Загальні</span>
<span class="t" style="left:709.00px;top:179.00px;font-size:16px;color:#0a0a14;letter-spacing:0.013px;">Класифікація</span>
<span class="t" style="left:823.00px;top:179.00px;font-size:16px;color:#0a0a14;letter-spacing:-0.041px;">Ціни</span>
<span class="t" style="left:871.00px;top:179.00px;font-size:16px;color:#0a0a14;letter-spacing:0.254px;">Зображення</span>
<span class="t" style="left:980.00px;top:179.00px;font-size:16px;color:#0a0a14;letter-spacing:0.770px;">Додатково</span>
<span class="t" style="left:1080.00px;top:179.00px;font-size:16px;color:#0a0a14;letter-spacing:-0.165px;">Бонуси</span>
<span class="t" style="left:1147.00px;top:179.00px;font-size:16px;color:#0a0a14;letter-spacing:0.297px;">Історія коду Моріона</span>
<div class="r" style="left:817.00px;top:175.00px;width:1.00px;height:20.00px;background:#8f8f8f;"></div>
<div class="r" style="left:865.00px;top:175.00px;width:1.00px;height:20.00px;background:#8f8f8f;"></div>
<div class="r" style="left:973.00px;top:175.00px;width:1.00px;height:20.00px;background:#8f8f8f;"></div>
<div class="r" style="left:1074.00px;top:175.00px;width:1.00px;height:20.00px;background:#8f8f8f;"></div>
<div class="r" style="left:1141.00px;top:175.00px;width:1.00px;height:20.00px;background:#8f8f8f;"></div>
<div class="r" style="left:628.00px;top:211.80px;width:1057.00px;height:150.70px;border:1px solid #dcdcdc;box-shadow:1px 1px 0 #fbfbfb, inset 1px 1px 0 #fbfbfb;"></div>
<span class="t" style="left:645.00px;top:227.00px;font-size:16px;color:#0a0a14;letter-spacing:0.197px;">Повна назва:</span>
<span class="t" style="left:704.00px;top:262.00px;font-size:16px;color:#0a0a14;letter-spacing:0.288px;">Назва:</span>
<span class="t" style="left:656.00px;top:297.00px;font-size:16px;color:#0a0a14;letter-spacing:-0.075px;">Всесвітнє ім&#x27;я:</span>
<span class="t" style="left:659.00px;top:331.00px;font-size:16px;color:#0a0a14;letter-spacing:0.225px;">Форма випуску:</span>
<div class="r" style="left:791.70px;top:220.00px;width:880.50px;height:30.80px;background:#f0f0f0;border:1px solid #727272;box-shadow:0 0 0 1px rgba(114,114,114,.32), inset 0 0 0 1px rgba(114,114,114,.28);"></div>
<span class="t" style="left:796.00px;top:227.00px;font-size:16.4px;color:#000;font-weight:bold;letter-spacing:0.719px;">Цитра Кальцемин таб. п/о фл. № 30</span>
<div class="r" style="left:791.70px;top:254.60px;width:880.50px;height:30.80px;background:#fff;border:1px solid #727272;box-shadow:0 0 0 1px rgba(114,114,114,.32), inset 0 0 0 1px rgba(114,114,114,.28);"></div>
<div class="r" style="left:796.00px;top:259.00px;width:139.00px;height:19.20px;background:#0078d7;"></div>
<span class="t" style="left:797.00px;top:262.00px;font-size:16px;color:#fff;letter-spacing:0.430px;">&lt;не определено&gt;</span>
<div class="r" style="left:791.70px;top:289.10px;width:880.50px;height:30.80px;background:#fff;border:1px solid #727272;box-shadow:0 0 0 1px rgba(114,114,114,.32), inset 0 0 0 1px rgba(114,114,114,.28);"></div>
<div class="r" style="left:791.70px;top:323.60px;width:608.70px;height:30.80px;background:#fff;border:1px solid #727272;box-shadow:0 0 0 1px rgba(114,114,114,.32), inset 0 0 0 1px rgba(114,114,114,.28);"></div>
<span class="t" style="left:796.00px;top:331.00px;font-size:16px;color:#0a0a14;letter-spacing:0.475px;">табл. п/о</span>
<span class="t" style="left:1408.50px;top:331.00px;font-size:16px;color:#0a0a14;letter-spacing:0.562px;">К-ть в упаковці:</span>
<div class="r" style="left:1549.00px;top:323.60px;width:123.20px;height:30.80px;background:#fff;border:1px solid #727272;box-shadow:0 0 0 1px rgba(114,114,114,.32), inset 0 0 0 1px rgba(114,114,114,.28);"></div>
<span class="t" style="left:1553.50px;top:331.00px;font-size:16px;color:#0a0a14;letter-spacing:-0.149px;">30</span>
<span class="t" style="left:781.00px;top:254.00px;font-size:21px;color:#f5a3a3;">*</span>
<div class="r" style="left:625.40px;top:377.60px;width:533.00px;height:497.70px;border:1px solid #dcdcdc;box-shadow:1px 1px 0 #fbfbfb, inset 1px 1px 0 #fbfbfb;"></div>
<span class="t" style="left:654.00px;top:394.00px;font-size:16px;color:#0a0a14;letter-spacing:0.246px;">Виробник:</span>
<div class="r" style="left:788.90px;top:386.70px;width:361.30px;height:30.90px;background:#fff;border:1px solid #727272;box-shadow:0 0 0 1px rgba(114,114,114,.32), inset 0 0 0 1px rgba(114,114,114,.28);"></div>
<span class="t" style="left:792.00px;top:394.00px;font-size:16px;color:#0a0a14;letter-spacing:0.024px;">Bayer Consumer Care [США]</span>
<span class="t" style="left:740.00px;top:429.00px;font-size:16px;color:#0a0a14;letter-spacing:-0.113px;">ПДВ:</span>
<div class="r" style="left:788.90px;top:421.23px;width:361.30px;height:30.90px;background:#fff;border:1px solid #727272;box-shadow:0 0 0 1px rgba(114,114,114,.32), inset 0 0 0 1px rgba(114,114,114,.28);"></div>
<span class="t" style="left:792.00px;top:429.00px;font-size:16px;color:#0a0a14;letter-spacing:0.237px;">ПДВ 7%</span>
<svg style="left:1129.8px;top:433.1px" width="13" height="8" viewBox="0 0 13 8"><path d="M0.7 0.9 L6.5 6.6 L12.3 0.9" fill="none" stroke="#454545" stroke-width="1.35"/></svg>
<span class="t" style="left:649.00px;top:463.00px;font-size:16px;color:#0a0a14;letter-spacing:0.511px;">Цінова група:</span>
<div class="r" style="left:788.90px;top:455.76px;width:361.30px;height:30.90px;background:#fff;border:1px solid #727272;box-shadow:0 0 0 1px rgba(114,114,114,.32), inset 0 0 0 1px rgba(114,114,114,.28);"></div>
<span class="t" style="left:792.00px;top:463.00px;font-size:16px;color:#0a0a14;letter-spacing:0.401px;">Биологически активные вещества</span>
<svg style="left:1129.8px;top:467.7px" width="13" height="8" viewBox="0 0 13 8"><path d="M0.7 0.9 L6.5 6.6 L12.3 0.9" fill="none" stroke="#454545" stroke-width="1.35"/></svg>
<span class="t" style="left:685.00px;top:498.00px;font-size:16px;color:#0a0a14;letter-spacing:0.380px;">Вид товару:</span>
<div class="r" style="left:788.90px;top:490.29px;width:361.30px;height:30.90px;background:#fff;border:1px solid #727272;box-shadow:0 0 0 1px rgba(114,114,114,.32), inset 0 0 0 1px rgba(114,114,114,.28);"></div>
<span class="t" style="left:792.00px;top:498.00px;font-size:16px;color:#0a0a14;letter-spacing:0.361px;">80-95 грн.</span>
<svg style="left:1129.8px;top:502.2px" width="13" height="8" viewBox="0 0 13 8"><path d="M0.7 0.9 L6.5 6.6 L12.3 0.9" fill="none" stroke="#454545" stroke-width="1.35"/></svg>
<span class="t" style="left:644.00px;top:532.00px;font-size:16px;color:#0a0a14;letter-spacing:0.408px;">Товарна група:</span>
<div class="r" style="left:788.90px;top:524.82px;width:361.30px;height:30.90px;background:#fff;border:1px solid #727272;box-shadow:0 0 0 1px rgba(114,114,114,.32), inset 0 0 0 1px rgba(114,114,114,.28);"></div>
<svg style="left:1129.8px;top:536.7px" width="13" height="8" viewBox="0 0 13 8"><path d="M0.7 0.9 L6.5 6.6 L12.3 0.9" fill="none" stroke="#454545" stroke-width="1.35"/></svg>
<span class="t" style="left:663.00px;top:567.00px;font-size:16px;color:#0a0a14;letter-spacing:0.375px;">Од.</span>
<div class="r" style="left:788.90px;top:559.35px;width:361.30px;height:30.90px;background:#fff;border:1px solid #727272;box-shadow:0 0 0 1px rgba(114,114,114,.32), inset 0 0 0 1px rgba(114,114,114,.28);"></div>
<span class="t" style="left:792.00px;top:567.00px;font-size:16px;color:#0a0a14;letter-spacing:-0.082px;">шт</span>
<svg style="left:1129.8px;top:571.2px" width="13" height="8" viewBox="0 0 13 8"><path d="M0.7 0.9 L6.5 6.6 L12.3 0.9" fill="none" stroke="#454545" stroke-width="1.35"/></svg>
<span class="t" style="left:634.00px;top:601.00px;font-size:16px;color:#0a0a14;letter-spacing:0.183px;">Умови зберігання:</span>
<div class="r" style="left:788.90px;top:593.88px;width:361.30px;height:30.90px;background:#fff;border:1px solid #727272;box-shadow:0 0 0 1px rgba(114,114,114,.32), inset 0 0 0 1px rgba(114,114,114,.28);"></div>
<svg style="left:1129.8px;top:605.8px" width="13" height="8" viewBox="0 0 13 8"><path d="M0.7 0.9 L6.5 6.6 L12.3 0.9" fill="none" stroke="#454545" stroke-width="1.35"/></svg>
<span class="t" style="left:647.00px;top:636.00px;font-size:16px;color:#0a0a14;letter-spacing:0.092px;">Світловий режим:</span>
<div class="r" style="left:788.90px;top:628.41px;width:361.30px;height:30.90px;background:#fff;border:1px solid #727272;box-shadow:0 0 0 1px rgba(114,114,114,.32), inset 0 0 0 1px rgba(114,114,114,.28);"></div>
<span class="t" style="left:709.00px;top:670.00px;font-size:16px;color:#0a0a14;letter-spacing:-0.165px;">УКТ ЗЕД:</span>
<div class="r" style="left:788.90px;top:662.94px;width:361.30px;height:30.90px;background:#fff;border:1px solid #727272;box-shadow:0 0 0 1px rgba(114,114,114,.32), inset 0 0 0 1px rgba(114,114,114,.28);"></div>
<span class="t" style="left:792.00px;top:670.00px;font-size:16px;color:#0a0a14;letter-spacing:0.101px;">2106909890</span>
<span class="t" style="left:643.00px;top:705.00px;font-size:16px;color:#0a0a14;letter-spacing:0.211px;">Глав.</span>
<div class="r" style="left:788.90px;top:697.47px;width:361.30px;height:30.90px;background:#fff;border:1px solid #727272;box-shadow:0 0 0 1px rgba(114,114,114,.32), inset 0 0 0 1px rgba(114,114,114,.28);"></div>
<div class="r" style="left:1099.00px;top:700.47px;width:22.00px;height:24.50px;background:#e1e1e1;border:1px solid #adadad;"></div>
<div class="r" style="left:1105.00px;top:712.00px;width:2.00px;height:2.00px;background:#505050;"></div>
<div class="r" style="left:1109.00px;top:712.00px;width:2.00px;height:2.00px;background:#505050;"></div>
<div class="r" style="left:1113.00px;top:712.00px;width:2.00px;height:2.00px;background:#505050;"></div>
<div class="r" style="left:1124.50px;top:700.47px;width:22.00px;height:24.50px;background:#e1e1e1;border:1px solid #adadad;"></div>
<span class="t" style="left:1128.46px;top:706.00px;font-size:16px;color:#0a0a14;">X</span>
<span class="t" style="left:733.00px;top:739.00px;font-size:16px;color:#0a0a14;letter-spacing:0.316px;">Колір:</span>
<div class="r" style="left:788.90px;top:732.00px;width:361.30px;height:30.90px;background:#fff;border:1px solid #727272;box-shadow:0 0 0 1px rgba(114,114,114,.32), inset 0 0 0 1px rgba(114,114,114,.28);"></div>
<div class="r" style="left:1099.00px;top:735.00px;width:22.00px;height:24.50px;background:#e1e1e1;border:1px solid #adadad;"></div>
<div class="r" style="left:1105.00px;top:746.00px;width:2.00px;height:2.00px;background:#505050;"></div>
<div class="r" style="left:1109.00px;top:746.00px;width:2.00px;height:2.00px;background:#505050;"></div>
<div class="r" style="left:1113.00px;top:746.00px;width:2.00px;height:2.00px;background:#505050;"></div>
<div class="r" style="left:1124.50px;top:735.00px;width:22.00px;height:24.50px;background:#e1e1e1;border:1px solid #adadad;"></div>
<span class="t" style="left:1128.46px;top:741.00px;font-size:16px;color:#0a0a14;">X</span>
<span class="t" style="left:720.00px;top:774.00px;font-size:16px;color:#0a0a14;letter-spacing:-0.275px;">Розмір:</span>
<div class="r" style="left:788.90px;top:766.53px;width:361.30px;height:30.90px;background:#fff;border:1px solid #727272;box-shadow:0 0 0 1px rgba(114,114,114,.32), inset 0 0 0 1px rgba(114,114,114,.28);"></div>
<div class="r" style="left:1099.00px;top:769.53px;width:22.00px;height:24.50px;background:#e1e1e1;border:1px solid #adadad;"></div>
<div class="r" style="left:1105.00px;top:781.00px;width:2.00px;height:2.00px;background:#505050;"></div>
<div class="r" style="left:1109.00px;top:781.00px;width:2.00px;height:2.00px;background:#505050;"></div>
<div class="r" style="left:1113.00px;top:781.00px;width:2.00px;height:2.00px;background:#505050;"></div>
<div class="r" style="left:1124.50px;top:769.53px;width:22.00px;height:24.50px;background:#e1e1e1;border:1px solid #adadad;"></div>
<span class="t" style="left:1128.46px;top:775.00px;font-size:16px;color:#0a0a14;">X</span>
<span class="t" style="left:719.00px;top:808.00px;font-size:16px;color:#0a0a14;letter-spacing:0.375px;">Склад:</span>
<div class="r" style="left:788.90px;top:801.06px;width:361.30px;height:30.90px;background:#fff;border:1px solid #727272;box-shadow:0 0 0 1px rgba(114,114,114,.32), inset 0 0 0 1px rgba(114,114,114,.28);"></div>
<div class="r" style="left:1099.00px;top:804.06px;width:22.00px;height:24.50px;background:#e1e1e1;border:1px solid #adadad;"></div>
<div class="r" style="left:1105.00px;top:815.00px;width:2.00px;height:2.00px;background:#505050;"></div>
<div class="r" style="left:1109.00px;top:815.00px;width:2.00px;height:2.00px;background:#505050;"></div>
<div class="r" style="left:1113.00px;top:815.00px;width:2.00px;height:2.00px;background:#505050;"></div>
<div class="r" style="left:1124.50px;top:804.06px;width:22.00px;height:24.50px;background:#e1e1e1;border:1px solid #adadad;"></div>
<span class="t" style="left:1128.46px;top:810.00px;font-size:16px;color:#0a0a14;">X</span>
<span class="t" style="left:657.00px;top:843.00px;font-size:16px;color:#0a0a14;letter-spacing:0.347px;">Рецептурність:</span>
<div class="r" style="left:788.90px;top:835.59px;width:361.30px;height:30.90px;background:#fff;border:1px solid #727272;box-shadow:0 0 0 1px rgba(114,114,114,.32), inset 0 0 0 1px rgba(114,114,114,.28);"></div>
<span class="t" style="left:792.00px;top:843.00px;font-size:16px;color:#0a0a14;letter-spacing:0.253px;">Без рецепта</span>
<svg style="left:1129.8px;top:847.5px" width="13" height="8" viewBox="0 0 13 8"><path d="M0.7 0.9 L6.5 6.6 L12.3 0.9" fill="none" stroke="#454545" stroke-width="1.35"/></svg>
<div class="r" style="left:1037.60px;top:389.70px;width:21.80px;height:24.50px;background:#e1e1e1;border:1px solid #adadad;"></div>
<div class="r" style="left:1043.00px;top:401.00px;width:2.00px;height:2.00px;background:#505050;"></div>
<div class="r" style="left:1047.00px;top:401.00px;width:2.00px;height:2.00px;background:#505050;"></div>
<div class="r" style="left:1052.00px;top:401.00px;width:2.00px;height:2.00px;background:#505050;"></div>
<div class="r" style="left:1063.30px;top:389.70px;width:83.30px;height:24.50px;background:#e1e1e1;border:1px solid #adadad;"></div>
<span class="t" style="left:1066.60px;top:396.00px;font-size:16px;color:#0a0a14;letter-spacing:0.781px;">Карточка</span>
<span class="t" style="left:778.60px;top:386.00px;font-size:21px;color:#f5a3a3;">*</span>
<span class="t" style="left:778.60px;top:420.00px;font-size:21px;color:#f5a3a3;">*</span>
<span class="t" style="left:778.60px;top:455.00px;font-size:21px;color:#f5a3a3;">*</span>
<div class="r" style="left:625.40px;top:892.00px;width:533.00px;height:81.00px;border:1px solid #dcdcdc;box-shadow:1px 1px 0 #fbfbfb, inset 1px 1px 0 #fbfbfb;"></div>
<div class="r" style="left:635.00px;top:884.00px;width:126.00px;height:16.00px;background:#f0f0f0;"></div>
<span class="t" style="left:637.00px;top:885.00px;font-size:16px;color:#0a0a14;letter-spacing:0.329px;">Діюча речовина</span>
<span class="t" style="left:739.00px;top:911.00px;font-size:16px;color:#0a0a14;letter-spacing:-0.721px;">МНН:</span>
<div class="r" style="left:788.90px;top:899.60px;width:361.30px;height:30.80px;background:#fff;border:1px solid #727272;box-shadow:0 0 0 1px rgba(114,114,114,.32), inset 0 0 0 1px rgba(114,114,114,.28);"></div>
<div class="r" style="left:1099.00px;top:902.60px;width:22.00px;height:24.40px;background:#e1e1e1;border:1px solid #adadad;"></div>
<div class="r" style="left:1105.00px;top:914.00px;width:2.00px;height:2.00px;background:#505050;"></div>
<div class="r" style="left:1109.00px;top:914.00px;width:2.00px;height:2.00px;background:#505050;"></div>
<div class="r" style="left:1113.00px;top:914.00px;width:2.00px;height:2.00px;background:#505050;"></div>
<div class="r" style="left:1124.50px;top:902.60px;width:22.00px;height:24.40px;background:#e1e1e1;border:1px solid #adadad;"></div>
<span class="t" style="left:1128.46px;top:908.00px;font-size:16px;color:#0a0a14;">X</span>
<span class="t" style="left:708.00px;top:941.00px;font-size:16px;color:#0a0a14;letter-spacing:0.269px;">Код АТС:</span>
<div class="r" style="left:788.90px;top:934.00px;width:361.30px;height:30.90px;background:#f0f0f0;border:1px solid #727272;box-shadow:0 0 0 1px rgba(114,114,114,.32), inset 0 0 0 1px rgba(114,114,114,.28);"></div>
<span class="t" style="left:700.00px;top:989.00px;font-size:16px;color:#0a0a14;letter-spacing:0.163px;">Звірено:</span>
<div class="r" style="left:784.00px;top:979.30px;width:362.00px;height:30.90px;background:#fff;border:1px solid #727272;box-shadow:0 0 0 1px rgba(114,114,114,.32), inset 0 0 0 1px rgba(114,114,114,.28);"></div>
<div class="r" style="left:1042.00px;top:982.30px;width:74.40px;height:24.50px;background:#e1e1e1;border:1px solid #adadad;"></div>
<span class="t" style="left:1045.50px;top:987.00px;font-size:16px;color:#0a0a14;letter-spacing:0.246px;">Сверить</span>
<div class="r" style="left:1120.30px;top:982.30px;width:22.00px;height:24.50px;background:#e1e1e1;border:1px solid #adadad;"></div>
<span class="t" style="left:1124.26px;top:988.00px;font-size:16px;color:#0a0a14;">X</span>
<span class="t" style="left:626.00px;top:1058.00px;font-size:16px;color:#0a0a14;letter-spacing:0.009px;">Примітка:</span>
<div class="r" style="left:626.80px;top:1075.00px;width:1185.20px;height:30.90px;background:#fff;border:1px solid #727272;box-shadow:0 0 0 1px rgba(114,114,114,.32), inset 0 0 0 1px rgba(114,114,114,.28);"></div>
<div class="r" style="left:627.30px;top:1115.70px;width:1184.00px;height:55.10px;border:1px solid #dcdcdc;box-shadow:1px 1px 0 #fbfbfb, inset 1px 1px 0 #fbfbfb;"></div>
<div class="r" style="left:636.00px;top:1107.70px;width:128.00px;height:16.00px;background:#f0f0f0;"></div>
<span class="t" style="left:638.00px;top:1110.00px;font-size:16px;color:#0a0a14;letter-spacing:0.191px;">Запис створено:</span>
<span class="t" style="left:638.00px;top:1138.00px;font-size:16px;color:#0a0a14;letter-spacing:0.465px;">Автор:</span>
<div class="r" style="left:694.40px;top:1130.20px;width:165.00px;height:30.80px;background:#fff;border:1px solid #727272;box-shadow:0 0 0 1px rgba(114,114,114,.32), inset 0 0 0 1px rgba(114,114,114,.28);"></div>
<span class="t" style="left:698.00px;top:1138.00px;font-size:16px;color:#0a0a14;letter-spacing:-0.609px;">GIFT</span>
<span class="t" style="left:869.00px;top:1138.00px;font-size:16px;color:#0a0a14;letter-spacing:0.825px;">Дата:</span>
<div class="r" style="left:919.00px;top:1130.40px;width:188.50px;height:30.60px;background:#fff;border:1px solid #dadada;"></div>
<span class="t" style="left:924.00px;top:1138.00px;font-size:16px;color:#0a0a14;letter-spacing:0.379px;">30.04.2020 08:56:32</span>
<div class="r" style="left:1165.50px;top:378.00px;width:519.00px;height:58.00px;border:1px solid #dcdcdc;box-shadow:1px 1px 0 #fbfbfb, inset 1px 1px 0 #fbfbfb;"></div>
<div class="r" style="left:1174.00px;top:370.00px;width:90.00px;height:16.00px;background:#f0f0f0;"></div>
<span class="t" style="left:1176.00px;top:372.00px;font-size:16px;color:#0a0a14;letter-spacing:0.214px;">Корпорація</span>
<div class="r" style="left:1169.80px;top:395.40px;width:499.50px;height:31.00px;background:#fff;border:1px solid #727272;box-shadow:0 0 0 1px rgba(114,114,114,.32), inset 0 0 0 1px rgba(114,114,114,.28);"></div>
<span class="t" style="left:1173.00px;top:403.00px;font-size:16px;color:#0a0a14;letter-spacing:0.241px;">не определено</span>
<div class="r" style="left:1644.00px;top:398.30px;width:21.70px;height:24.70px;background:#e1e1e1;border:1px solid #adadad;"></div>
<div class="r" style="left:1649.00px;top:410.00px;width:2.00px;height:2.00px;background:#505050;"></div>
<div class="r" style="left:1654.00px;top:410.00px;width:2.00px;height:2.00px;background:#505050;"></div>
<div class="r" style="left:1658.00px;top:410.00px;width:2.00px;height:2.00px;background:#505050;"></div>
<div class="r" style="left:1165.50px;top:446.80px;width:323.50px;height:49.40px;border:1px solid #dcdcdc;box-shadow:1px 1px 0 #fbfbfb, inset 1px 1px 0 #fbfbfb;"></div>
<div class="r" style="left:1174.00px;top:438.80px;width:171.00px;height:16.00px;background:#f0f0f0;"></div>
<span class="t" style="left:1176.00px;top:441.00px;font-size:16px;color:#0a0a14;letter-spacing:0.235px;">Внутрішній штрих-код</span>
<div class="r" style="left:1169.80px;top:458.00px;width:308.50px;height:31.00px;background:#fff;border:1px solid #727272;box-shadow:0 0 0 1px rgba(114,114,114,.32), inset 0 0 0 1px rgba(114,114,114,.28);"></div>
<span class="t" style="left:1174.00px;top:465.00px;font-size:16px;color:#0a0a14;letter-spacing:0.024px;">4250369504688</span>
<div class="r" style="left:1497.00px;top:446.80px;width:187.50px;height:49.40px;border:1px solid #dcdcdc;box-shadow:1px 1px 0 #fbfbfb, inset 1px 1px 0 #fbfbfb;"></div>
<div class="r" style="left:1506.00px;top:438.80px;width:103.50px;height:16.00px;background:#f0f0f0;"></div>
<span class="t" style="left:1508.00px;top:441.00px;font-size:16px;color:#0a0a14;letter-spacing:-0.015px;">Спосіб обліку</span>
<div class="r" style="left:1508.10px;top:470.10px;width:19.20px;height:19.20px;background:#fff;border:1px solid #333;border-radius:50%;box-shadow:inset 0 0 0 1px rgba(51,51,51,.55);"></div>
<div class="r" style="left:1512.50px;top:474.50px;width:10.40px;height:10.40px;background:#333;border-radius:50%;"></div>
<span class="t" style="left:1531.00px;top:473.00px;font-size:16px;color:#0a0a14;letter-spacing:0.492px;">Товар</span>
<div class="r" style="left:1595.60px;top:470.10px;width:19.20px;height:19.20px;background:#fff;border:1px solid #333;border-radius:50%;box-shadow:inset 0 0 0 1px rgba(51,51,51,.55);"></div>
<span class="t" style="left:1618.00px;top:473.00px;font-size:16px;color:#0a0a14;letter-spacing:0.213px;">Послуги</span>
<div class="r" style="left:1165.50px;top:508.00px;width:519.00px;height:97.20px;border:1px solid #dcdcdc;box-shadow:1px 1px 0 #fbfbfb, inset 1px 1px 0 #fbfbfb;"></div>
<div class="r" style="left:1174.00px;top:500.00px;width:115.00px;height:16.00px;background:#f0f0f0;"></div>
<span class="t" style="left:1176.00px;top:502.00px;font-size:16px;color:#0a0a14;letter-spacing:0.173px;">Внешние коды</span>
<span class="t" style="left:1209.00px;top:533.00px;font-size:16px;color:#0a0a14;letter-spacing:0.184px;">Код МОЗ:</span>
<div class="r" style="left:1293.00px;top:524.70px;width:376.40px;height:30.90px;background:#fff;border:1px solid #727272;box-shadow:0 0 0 1px rgba(114,114,114,.32), inset 0 0 0 1px rgba(114,114,114,.28);"></div>
<span class="t" style="left:1176.00px;top:567.00px;font-size:16px;color:#0a0a14;letter-spacing:0.201px;">Код Моріона:</span>
<div class="r" style="left:1293.00px;top:559.40px;width:239.90px;height:30.90px;background:#fff;border:1px solid #727272;box-shadow:0 0 0 1px rgba(114,114,114,.32), inset 0 0 0 1px rgba(114,114,114,.28);"></div>
<span class="t" style="left:1475.00px;top:567.00px;font-size:16px;color:#0a0a14;letter-spacing:-0.232px;">194618</span>
<div class="r" style="left:1554.00px;top:561.00px;width:113.00px;height:26.60px;background:#e1e1e1;border:1px solid #adadad;"></div>
<span class="t" style="left:1567.30px;top:567.00px;font-size:16px;color:#0a0a14;letter-spacing:-0.252px;">Інформація</span>
<div class="r" style="left:1165.50px;top:621.00px;width:519.00px;height:82.00px;border:1px solid #dcdcdc;box-shadow:1px 1px 0 #fbfbfb, inset 1px 1px 0 #fbfbfb;"></div>
<div class="r" style="left:1174.00px;top:613.00px;width:143.00px;height:16.00px;background:#f0f0f0;"></div>
<span class="t" style="left:1176.00px;top:615.00px;font-size:16px;color:#0a0a14;letter-spacing:0.178px;">Реєстрація товару</span>
<span class="t" style="left:1248.00px;top:639.00px;font-size:16px;color:#0a0a14;letter-spacing:-0.283px;">Номер:</span>
<div class="r" style="left:1309.30px;top:631.40px;width:360.10px;height:30.70px;background:#fff;border:1px solid #727272;box-shadow:0 0 0 1px rgba(114,114,114,.32), inset 0 0 0 1px rgba(114,114,114,.28);"></div>
<span class="t" style="left:1313.00px;top:639.00px;font-size:16px;color:#0a0a14;letter-spacing:0.507px;">05.03.02-03/111255</span>
<span class="t" style="left:1244.00px;top:673.00px;font-size:16px;color:#0a0a14;letter-spacing:0.620px;">Дата з:</span>
<div class="r" style="left:1309.30px;top:665.80px;width:119.90px;height:30.70px;background:#fff;border:1px solid #727272;box-shadow:0 0 0 1px rgba(114,114,114,.32), inset 0 0 0 1px rgba(114,114,114,.28);"></div>
<span class="t" style="left:1314.00px;top:673.00px;font-size:16px;color:#0a0a14;letter-spacing:0.411px;">13.11.2012</span>
<svg style="left:1408.5px;top:677.4px" width="13" height="8" viewBox="0 0 13 8"><path d="M0.7 0.9 L6.5 6.6 L12.3 0.9" fill="none" stroke="#454545" stroke-width="1.35"/></svg>
<span class="t" style="left:1469.00px;top:673.00px;font-size:16px;color:#0a0a14;letter-spacing:0.515px;">Дата по:</span>
<div class="r" style="left:1549.00px;top:665.80px;width:120.40px;height:30.70px;background:#fff;border:1px solid #727272;box-shadow:0 0 0 1px rgba(114,114,114,.32), inset 0 0 0 1px rgba(114,114,114,.28);"></div>
<span class="t" style="left:1554.00px;top:673.00px;font-size:16px;color:#0a0a14;letter-spacing:0.411px;">13.11.2017</span>
<svg style="left:1648.5px;top:677.4px" width="13" height="8" viewBox="0 0 13 8"><path d="M0.7 0.9 L6.5 6.6 L12.3 0.9" fill="none" stroke="#454545" stroke-width="1.35"/></svg>
<div class="r" style="left:1165.50px;top:715.60px;width:519.00px;height:86.40px;border:1px solid #dcdcdc;box-shadow:1px 1px 0 #fbfbfb, inset 1px 1px 0 #fbfbfb;"></div>
<div class="r" style="left:1175.00px;top:707.60px;width:156.00px;height:16.00px;background:#f0f0f0;"></div>
<span class="t" style="left:1177.00px;top:710.00px;font-size:16px;color:#0a0a14;letter-spacing:0.148px;">Гігієнічний висновок</span>
<div class="r" style="left:1240px;top:730px;width:69.3px;height:28px;overflow:hidden;"><span class="t" style="left:5px;top:5.46px;font-size:16px;color:#0a0a14;letter-spacing:0.2px;">Висновок:</span></div>
<div class="r" style="left:1309.30px;top:728.60px;width:357.10px;height:30.60px;background:#fff;border:1px solid #727272;box-shadow:0 0 0 1px rgba(114,114,114,.32), inset 0 0 0 1px rgba(114,114,114,.28);"></div>
<span class="t" style="left:1244.00px;top:771.00px;font-size:16px;color:#0a0a14;letter-spacing:0.620px;">Дата з:</span>
<div class="r" style="left:1309.30px;top:763.00px;width:119.90px;height:30.80px;background:#fff;border:1px solid #727272;box-shadow:0 0 0 1px rgba(114,114,114,.32), inset 0 0 0 1px rgba(114,114,114,.28);"></div>
<svg style="left:1408.5px;top:774.9px" width="13" height="8" viewBox="0 0 13 8"><path d="M0.7 0.9 L6.5 6.6 L12.3 0.9" fill="none" stroke="#454545" stroke-width="1.35"/></svg>
<span class="t" style="left:1469.00px;top:771.00px;font-size:16px;color:#0a0a14;letter-spacing:0.515px;">Дата по:</span>
<div class="r" style="left:1546.00px;top:763.00px;width:120.40px;height:30.80px;background:#fff;border:1px solid #727272;box-shadow:0 0 0 1px rgba(114,114,114,.32), inset 0 0 0 1px rgba(114,114,114,.28);"></div>
<svg style="left:1645.5px;top:774.9px" width="13" height="8" viewBox="0 0 13 8"><path d="M0.7 0.9 L6.5 6.6 L12.3 0.9" fill="none" stroke="#454545" stroke-width="1.35"/></svg>
<div class="r" style="left:1165.50px;top:818.70px;width:519.00px;height:56.80px;border:1px solid #dcdcdc;box-shadow:1px 1px 0 #fbfbfb, inset 1px 1px 0 #fbfbfb;"></div>
<div class="r" style="left:1175.00px;top:810.70px;width:188.00px;height:16.00px;background:#f0f0f0;"></div>
<span class="t" style="left:1177.00px;top:813.00px;font-size:16px;color:#0a0a14;letter-spacing:0.202px;">Температура зберігання</span>
<span class="t" style="left:1258.00px;top:841.00px;font-size:16px;color:#0a0a14;letter-spacing:0.278px;">Мін.:</span>
<div class="r" style="left:1309.20px;top:833.30px;width:120.00px;height:31.10px;background:#fff;border:1px solid #727272;box-shadow:0 0 0 1px rgba(114,114,114,.32), inset 0 0 0 1px rgba(114,114,114,.28);"></div>
<span class="t" style="left:1414.60px;top:841.00px;font-size:16px;color:#0a0a14;">0</span>
<span class="t" style="left:1486.00px;top:841.00px;font-size:16px;color:#0a0a14;letter-spacing:0.420px;">Макс.:</span>
<div class="r" style="left:1546.40px;top:833.30px;width:120.00px;height:31.10px;background:#fff;border:1px solid #727272;box-shadow:0 0 0 1px rgba(114,114,114,.32), inset 0 0 0 1px rgba(114,114,114,.28);"></div>
<span class="t" style="left:1651.80px;top:841.00px;font-size:16px;color:#0a0a14;">0</span>
<div class="r" style="left:1165.90px;top:891.40px;width:518.60px;height:71.30px;border:1px solid #dcdcdc;box-shadow:1px 1px 0 #fbfbfb, inset 1px 1px 0 #fbfbfb;"></div>
<div class="r" style="left:1172.00px;top:882.00px;width:216.00px;height:19.00px;background:#f0f0f0;"></div>
<div class="r" style="left:1175.20px;top:881.40px;width:19.60px;height:19.60px;background:#fff;border:1px solid #2f2f2f;box-shadow:inset 0 0 0 1px rgba(47,47,47,.5);"></div>
<span class="t" style="left:1198.00px;top:884.00px;font-size:16px;color:#0a0a14;letter-spacing:0.391px;">Цінове регулювання</span>
<div class="r" style="left:1182.70px;top:908.30px;width:19.60px;height:19.60px;background:#fff;border:1px solid #cfcfcf;box-shadow:inset 0 0 0 1px rgba(207,207,207,.5);"></div>
<span class="t" style="left:1206.00px;top:911.00px;font-size:16px;color:#a7a7a7;letter-spacing:0.036px;">Національний список</span>
<div class="r" style="left:1444.90px;top:908.30px;width:19.60px;height:19.60px;background:#fff;border:1px solid #2f2f2f;box-shadow:inset 0 0 0 1px rgba(47,47,47,.5);"></div>
<span class="t" style="left:1468.00px;top:911.00px;font-size:16px;color:#0a0a14;letter-spacing:0.266px;">Постанова 863</span>
<div class="r" style="left:1182.70px;top:938.50px;width:19.60px;height:19.60px;background:#fff;border:1px solid #2f2f2f;box-shadow:inset 0 0 0 1px rgba(47,47,47,.5);"></div>
<span class="t" style="left:1206.00px;top:941.00px;font-size:16px;color:#0a0a14;letter-spacing:0.252px;">Национальный каталог цен</span>
<div class="r" style="left:1165.90px;top:973.00px;width:518.60px;height:76.00px;border:1px solid #dcdcdc;box-shadow:1px 1px 0 #fbfbfb, inset 1px 1px 0 #fbfbfb;"></div>
<div class="r" style="left:1174.00px;top:965.00px;width:90.00px;height:16.00px;background:#f0f0f0;"></div>
<span class="t" style="left:1176.00px;top:967.00px;font-size:16px;color:#0a0a14;letter-spacing:0.322px;">Відпочинок</span>
<div class="r" style="left:1182.70px;top:987.70px;width:19.60px;height:19.60px;background:#fff;border:1px solid #cfcfcf;box-shadow:inset 0 0 0 1px rgba(207,207,207,.5);"></div>
<svg style="left:1183.0px;top:988.0px" width="18" height="18" viewBox="0 0 18 18"><path d="M3.5 9.5 L7 13 L15 4.5" fill="none" stroke="#c4c4c4" stroke-width="1.6"/></svg>
<span class="t" style="left:1206.00px;top:990.00px;font-size:16px;color:#a7a7a7;letter-spacing:0.082px;">Асортиментний план</span>
<div class="r" style="left:1414.90px;top:987.70px;width:19.60px;height:19.60px;background:#fff;border:1px solid #2f2f2f;box-shadow:inset 0 0 0 1px rgba(47,47,47,.5);"></div>
<span class="t" style="left:1438.00px;top:990.00px;font-size:16px;color:#0a0a14;letter-spacing:0.853px;">Бюджет</span>
<div class="r" style="left:1182.70px;top:1016.20px;width:19.60px;height:19.60px;background:#fff;border:1px solid #2f2f2f;box-shadow:inset 0 0 0 1px rgba(47,47,47,.5);"></div>
<span class="t" style="left:1206.40px;top:1019.00px;font-size:16px;color:#0a0a14;letter-spacing:0.194px;">Національний зворотний</span>
<div class="r" style="left:1388.60px;top:1014.00px;width:26.00px;height:24.00px;background:#f0f0f0;"></div>
<div class="r" style="left:1414.90px;top:1016.20px;width:19.60px;height:19.60px;background:#fff;border:1px solid #2f2f2f;box-shadow:inset 0 0 0 1px rgba(47,47,47,.5);"></div>
<span class="t" style="left:1438.00px;top:1019.00px;font-size:16px;color:#0a0a14;letter-spacing:0.468px;">Не використовувати</span>
<div class="r" style="left:1571.50px;top:1014.00px;width:100.00px;height:24.00px;background:#f0f0f0;"></div>
<div class="r" style="left:1703.00px;top:177.20px;width:108.80px;height:36.20px;background:#e1e1e1;border:4px solid #fb0000;border-radius:2.5px;"></div>
<div class="r" style="left:1706.60px;top:180.80px;width:101.60px;height:29.00px;border:1px solid #1f5a9a;"></div>
<span class="t" style="left:1741.40px;top:187.00px;font-size:16px;color:#0a0a14;letter-spacing:1.349px;">Так</span>
<div class="r" style="left:1705.00px;top:226.00px;width:106.00px;height:34.00px;background:#e1e1e1;border:1px solid #adadad;"></div>
<span class="t" style="left:1715.30px;top:236.00px;font-size:16px;color:#0a0a14;letter-spacing:0.562px;">Скасувати</span>
</body></html>
